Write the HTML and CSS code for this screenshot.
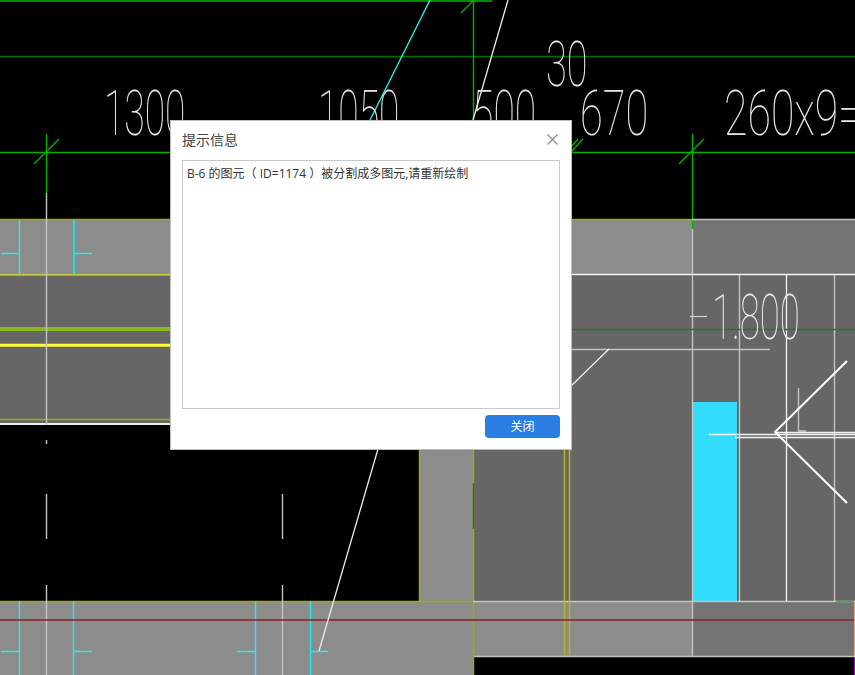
FILE: index.html
```html
<!DOCTYPE html>
<html lang="zh">
<head>
<meta charset="utf-8">
<title>提示信息</title>
<link rel="stylesheet" href="styles.css">
</head>
<body>
<main class="stage">
  <svg class="cad" width="855" height="675" viewBox="0 0 855 675" aria-hidden="true">
    <g class="crisp">
      <rect class="light" x="0" y="220" width="692" height="54"/>
      <rect class="mid" x="692" y="220" width="163" height="54"/>
      <rect class="dark" x="0" y="275" width="855" height="149"/>
      <rect class="dark" x="473" y="424" width="382" height="177"/>
      <rect class="light" x="419" y="424" width="54" height="177"/>
      <rect class="light" x="0" y="601" width="692" height="55"/>
      <rect class="mid" x="692" y="601" width="163" height="55"/>
      <rect class="light" x="0" y="656" width="473" height="19"/>
      <rect class="cyanfill" x="693" y="402" width="44" height="199"/>
    </g>
    <g>
      <path class="green-top" d="M0 1H492"/>
      <path class="green-dim" d="M0 56.500H855"/>
      <path class="green" d="M0 152.500H855M46.500 134V193M692.500 134V229M473.500 0V120"/>
      <path class="olive" d="M0 219.500H692M0 419.500H170M419.500 424V601M0 601.500H473M473.500 449V675"/>
      <path class="pale-yellow" d="M0 274.700H170"/>
      <path class="lime" d="M0 329H170"/>
      <path class="yellow" d="M0 345.300H170"/>
      <path class="white2" d="M0 424H170"/>
      <path class="greyline" d="M46.500 193V425M46.500 440V444M46.500 494V539M46.500 585V675M282.500 494V539M282.500 585V675M692.500 229V656M692 219.500H855M739.500 275V601M834.500 275V601M571 349.500H770M474 656.500H855M473 601.500H855"/>
      <path class="whiteline" d="M571 274.500H855M786.500 275V601"/>
      <path class="dark-green" d="M571 329.500H855M473.500 483V529"/>
      <path class="cyan" d="M19.500 220V274M1 253.500H19M1 651.500H19M74 651.500H92M237 651.500H255M310 651.500H328M74 253.500H92M19.500 601V675M73.500 601V675M255.500 601V675M310.500 601V675"/>
      <path class="cyan-wide" d="M74 220V274"/>
      <path class="olive-bright" d="M564.500 449V656M569.500 449V656"/>
      <path class="red" d="M0 620H855"/>
      <path class="greyline" d="M798.500 388V431H806"/>
      <path class="whiteline" d="M709 434.500H855M735 437.500H855M775 432.500H855"/>
      <path class="accent-green" d="M836 601.500H854"/>
      <path class="accent-pink" d="M854.500 602V656"/>
      <path class="accent-purple" d="M854.500 657V675"/>
    </g>
    <g>
      <path class="green-thin" d="M34 164L59 139M679 164L704 139M461 13L473 1M571 152L583 139M571 147L578 139"/>
      <path class="cyan" d="M430 0L370 120"/>
      <path class="diag" d="M508 0L473 120M378 449L319 651M571 386L609 349"/>
      <path class="arrow" d="M847 361L775 432L847 503"/>
    </g>
    <g class="dim">
      <text transform="matrix(.59 0 0 1 104 135)">1300</text>
      <text transform="matrix(.59 0 0 1 318 135)">1050</text>
      <text transform="matrix(.62 0 0 1 472 135)">500</text>
      <text transform="matrix(.66 0 0 1 580 135)">670</text>
      <text transform="matrix(.68 0 0 1 724 135)">260x9=</text>
      <text transform="matrix(.6 0 0 1 546 86)">30</text>
      <text transform="matrix(.58 0 0 1 712 339)">1.800</text>
    </g>
    <path class="thin" d="M690 316.500H707"/>
  </svg>

  <section class="dialog">
    <header class="dialog-head">
      <h1 class="dialog-title">提示信息</h1>
      <svg class="close" width="11" height="11" viewBox="0 0 11 11" aria-label="关闭">
        <path d="M.5 .5L10.500 10.500M10.500 .5L.5 10.500"/>
      </svg>
    </header>
    <div class="message">B-6 的图元（ ID=1174 ）被分割成多图元,请重新绘制</div>
    <footer class="dialog-foot">
      <button class="btn" type="button">关闭</button>
    </footer>
  </section>
</main>
</body>
</html>
```

FILE: styles.css
```css
html, body {
  margin: 0;
  padding: 0;
  background: #000;
}
.stage {
  position: relative;
  width: 855px;
  height: 675px;
  overflow: hidden;
  background: #000;
}
.cad {
  display: block;
}
.cad path {
  fill: none;
}
.crisp { shape-rendering: crispEdges; }
.light { fill: #8c8c8c; }
.mid { fill: #737373; }
.dark { fill: #666666; }
.cyanfill { fill: #33ddff; }
.green-top { stroke: #008c00; stroke-width: 2; }
.green-dim { stroke: #006e00; stroke-width: 1.4; }
.green { stroke: #00b400; stroke-width: 1.4; }
.green-thin { stroke: #00b400; stroke-width: 1.4; }
.olive { stroke: #a8a800; stroke-width: 1.5; }
.olive-bright { stroke: #b4b41e; stroke-width: 1.6; }
.pale-yellow { stroke: #c4c43c; stroke-width: 2; }
.lime { stroke: #8cb81e; stroke-width: 4; }
.yellow { stroke: #ffff33; stroke-width: 3; }
.white2 { stroke: #f0f0f0; stroke-width: 2; }
.greyline { stroke: #c4c4c4; stroke-width: 1.4; }
.whiteline { stroke: #f4f4f4; stroke-width: 1.3; }
.dark-green { stroke: #2f702f; stroke-width: 1.5; }
.cyan { stroke: #22eeee; stroke-width: 1.4; }
.cyan-wide { stroke: #22dddd; stroke-width: 2; }
.red { stroke: #8a2020; stroke-width: 1.4; }
.diag { stroke: #ececec; stroke-width: 1.3; }
.arrow { stroke: #ffffff; stroke-width: 2; }
.thin { stroke: #d0d0d0; stroke-width: 1.2; }
.accent-green { stroke: #22c522; stroke-width: 1.3; }
.accent-pink { stroke: #d89a80; stroke-width: 1.3; }
.accent-purple { stroke: #a000c0; stroke-width: 1.3; }
.dim {
  opacity: .98;
}
.dim text {
  font-family: Roboto, "Liberation Sans", sans-serif;
  font-weight: 100;
  font-size: 63px;
  fill: #ededed;
}

.dialog {
  position: absolute;
  left: 170px;
  top: 120px;
  width: 402px;
  height: 330px;
  box-sizing: border-box;
  display: flex;
  flex-direction: column;
  padding: 0 11px 11px;
  background: #fff;
  border: 1px solid #bdbdbd;
  font-family: "Open Sans", "Noto Sans CJK SC", sans-serif;
}
.dialog-head {
  display: flex;
  align-items: center;
  justify-content: space-between;
  box-sizing: border-box;
  height: 39px;
  padding: 0 2px 3px 0;
  flex: none;
}
.dialog-title {
  margin: 0;
  font-size: 14px;
  font-weight: 400;
  color: #444;
}
.close {
  flex: none;
}
.close path {
  fill: none;
  stroke: #8c8c8c;
  stroke-width: 1.2;
}
.message {
  flex: 1;
  box-sizing: border-box;
  border: 1px solid #c8c8c8;
  padding: 4px 4px 3px;
  font-size: 12px;
  line-height: 18px;
  color: #333;
}
.dialog-foot {
  display: flex;
  justify-content: flex-end;
  flex: none;
  padding-top: 6px;
}
.btn {
  width: 75px;
  height: 23px;
  padding: 0;
  border: 0;
  border-radius: 4px;
  background: #2b7fe3;
  color: #fff;
  font-family: inherit;
  font-size: 12px;
  line-height: 23px;
}
```
